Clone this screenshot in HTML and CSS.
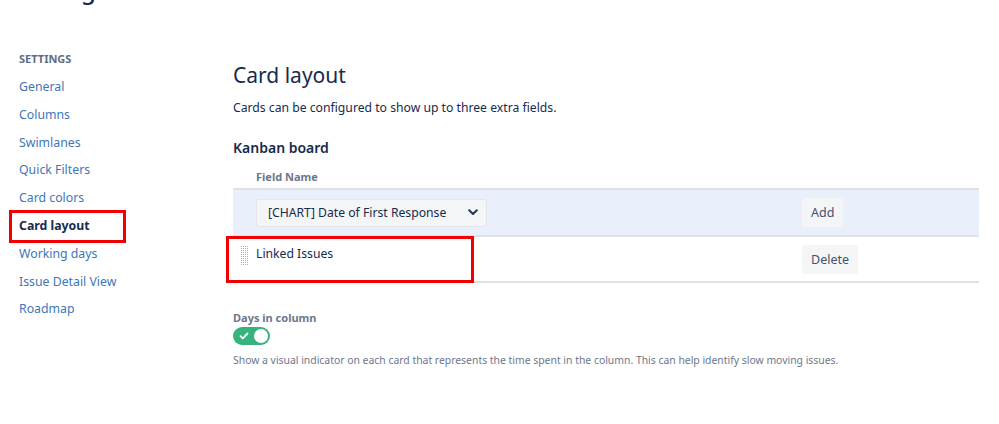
FILE: index.html
```html
<!DOCTYPE html>
<html>
<head>
<meta charset="utf-8">
<link rel="stylesheet" href="styles.css">
</head>
<body>
<div class="top-title">Settings</div>
<div class="layout">
  <nav class="sidebar">
    <div class="side-head">SETTINGS</div>
    <a class="side-link">General</a>
    <a class="side-link">Columns</a>
    <a class="side-link">Swimlanes</a>
    <a class="side-link">Quick Filters</a>
    <a class="side-link">Card colors</a>
    <a class="side-link active">Card layout</a>
    <a class="side-link">Working days</a>
    <a class="side-link">Issue Detail View</a>
    <a class="side-link">Roadmap</a>
  </nav>
  <main class="main">
    <h2 class="page-title">Card layout</h2>
    <p class="desc">Cards can be configured to show up to three extra fields.</p>
    <h3 class="board-title">Kanban board</h3>
    <div class="table">
      <div class="thead">Field Name</div>
      <div class="row row-add">
        <div class="cell-field">
          <div class="select">
            <span>[CHART] Date of First Response</span>
            <svg class="chev" width="10" height="7" viewBox="0 0 10 7"><path d="M1.2 1.2 L5 5 L8.8 1.2" fill="none" stroke="#253858" stroke-width="2" stroke-linecap="round" stroke-linejoin="round"/></svg>
          </div>
        </div>
        <div class="cell-action"><button class="btn">Add</button></div>
      </div>
      <div class="row row-item">
        <div class="cell-field">
          <svg class="handle" width="7" height="20" viewBox="0 0 7 20">
            <defs><pattern id="dots" width="2" height="2" patternUnits="userSpaceOnUse"><rect width="1" height="1" fill="#a5adba"/></pattern></defs>
            <rect width="7" height="20" fill="url(#dots)"/>
          </svg>
          <span class="field-name">Linked Issues</span>
          <span class="mark"></span>
        </div>
        <div class="cell-action"><button class="btn">Delete</button></div>
      </div>
    </div>
    <div class="days">
      <div class="days-label">Days in column</div>
      <div class="toggle">
        <svg class="check" width="10" height="8" viewBox="0 0 10 8"><path d="M1.5 4.2 L3.8 6.3 L8.5 1.5" fill="none" stroke="#fff" stroke-width="1.8" stroke-linecap="round" stroke-linejoin="round"/></svg>
        <span class="knob"></span>
      </div>
      <div class="days-help">Show a visual indicator on each card that represents the time spent in the column. This can help identify slow moving issues.</div>
    </div>
  </main>
</div>
</body>
</html>
```
FILE: styles.css
```css
*, *::before, *::after { box-sizing: border-box; }
html, body { margin: 0; padding: 0; background: #fff; }
body {
  font-family: "Noto Sans", "Open Sans", sans-serif;
  color: #172b4d;
  width: 999px;
  height: 424px;
  overflow: hidden;
}
.top-title {
  font-size: 24px;
  line-height: 30px;
  height: 30px;
  margin-top: -25px;
  padding-left: 14px;
  color: #172b4d;
  font-weight: 500;
}
.layout { display: flex; }
.sidebar {
  width: 233px;
  padding-left: 19px;
  padding-top: 47px;
  display: flex;
  flex-direction: column;
}
.side-head {
  font-size: 11px;
  font-weight: 700;
  color: #5e6c84;
  line-height: 14px;
  margin-bottom: 7px;
}
.side-link {
  font-size: 12.3px;
  line-height: 27.8px;
  color: #4076b8;
  position: relative;
  display: block;
}
.side-link.active { color: #172b4d; font-weight: 700; }
.side-link.active::after {
  content: "";
  position: absolute;
  left: -10px;
  top: -2px;
  width: 117px;
  height: 33px;
  border: 3px solid #f00000;
}
.main { flex: 1; padding-top: 55px; }
.page-title {
  margin: 0;
  font-size: 21px;
  font-weight: 400;
  line-height: 30px;
  color: #172b4d;
}
.desc {
  margin: 9px 0 0;
  font-size: 12.2px;
  line-height: 18px;
  color: #172b4d;
}
.board-title {
  margin: 21px 0 0;
  font-size: 14px;
  font-weight: 600;
  line-height: 20px;
}
.table { width: 746px; margin-top: 12px; }
.thead {
  font-size: 11px;
  font-weight: 700;
  color: #6b778c;
  padding-left: 23px;
  line-height: 14px;
  padding-bottom: 4px;
  border-bottom: 2px solid #dfe1e6;
}
.row {
  display: flex;
  align-items: center;
  height: 46px;
  border-bottom: 2px solid #dfe1e6;
}
.row-add { background: #e9f0fc; height: 47px; }
.cell-field {
  width: 569px;
  display: flex;
  align-items: center;
  padding-left: 23px;
  position: relative;
  height: 100%;
}
.select {
  width: 231px;
  height: 28px;
  background: #f4f5f7;
  border: 1px solid #e4e6ea;
  border-radius: 3px;
  display: flex;
  align-items: center;
  justify-content: space-between;
  padding: 0 8px 0 11px;
  font-size: 12.2px;
  color: #172b4d;
}
.chev { display: block; }
.cell-action { display: flex; align-items: center; }
.btn {
  font-family: inherit;
  font-size: 12.5px;
  color: #42526e;
  background: #f4f5f7;
  border: none;
  border-radius: 3px;
  height: 29px;
  padding: 0 9px;
}
.row-item .cell-field { align-items: flex-start; padding-top: 8px; }
.handle {
  position: absolute;
  left: 8px;
  top: 9px;
  display: block;
}
.field-name { font-size: 12.2px; line-height: 18px; color: #172b4d; }
.mark {
  position: absolute;
  left: -7px;
  top: -1px;
  width: 248px;
  height: 47px;
  border: 3px solid #f00000;
}
.days { margin-top: 28px; }
.days-label {
  font-size: 11px;
  font-weight: 700;
  color: #6b778c;
  line-height: 14px;
}
.toggle {
  margin-top: 2px;
  width: 37px;
  height: 18px;
  border-radius: 9px;
  background: #36b37e;
  display: flex;
  align-items: center;
  justify-content: space-between;
  padding: 0 2px 0 6px;
}
.check { display: block; }
.knob {
  width: 14px;
  height: 14px;
  border-radius: 50%;
  background: #fff;
}
.days-help {
  margin-top: 8px;
  font-size: 10.4px;
  color: #6b778c;
  line-height: 14px;
}
```
